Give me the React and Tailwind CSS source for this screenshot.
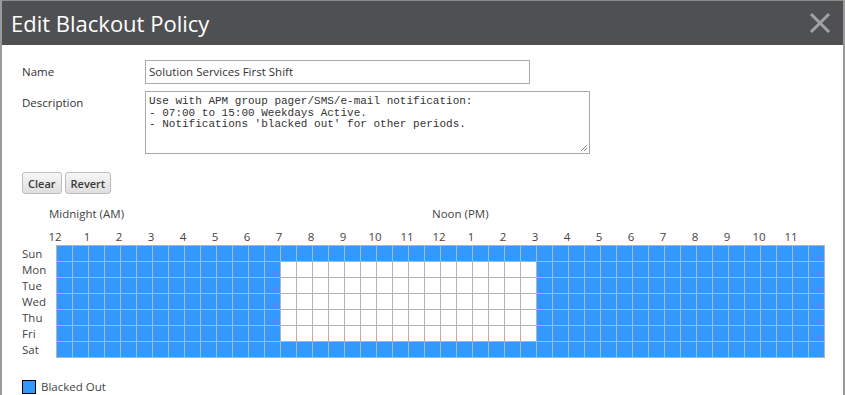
import React from "react";

const DAYS = ["Sun", "Mon", "Tue", "Wed", "Thu", "Fri", "Sat"];
const HOURS = ["12", "1", "2", "3", "4", "5", "6", "7", "8", "9", "10", "11", "12", "1", "2", "3", "4", "5", "6", "7", "8", "9", "10", "11"];

// weekdays 07:00 - 15:00 are active (not blacked out)
function isBlacked(day, slot) {
  if (day === 0 || day === 6) return true;
  return slot < 14 || slot >= 30;
}

function CloseIcon() {
  return (
    <svg width="22" height="22" viewBox="0 0 22 22">
      <path d="M3 3 L19 19 M19 3 L3 19" stroke="#9da2a4" strokeWidth="3" strokeLinecap="square" />
    </svg>
  );
}

function GridButton({ children }) {
  return (
    <button className="h-[22px] px-[5px] rounded-[3px] border border-[#bdbdbd] bg-gradient-to-b from-[#f7f7f7] to-[#dedede] text-[11px] font-semibold text-[#3a3a3a] leading-none">
      {children}
    </button>
  );
}

export default function App() {
  return (
    <div
      className="w-[845px] h-[395px] overflow-hidden bg-white border-l-2 border-r-2 border-[#9a9a9a] text-[#333]"
      style={{ fontFamily: '"Open Sans", "Noto Sans", sans-serif' }}
    >
      <div className="h-[45px] bg-[#4f5052] border-t border-[#8a8a8a] flex items-center justify-between pl-[9px] pr-[12px]">
        <div className="text-white text-[22px] leading-none">Edit Blackout Policy</div>
        <CloseIcon />
      </div>

      <div className="pl-[20px]">
        <div className="flex items-center mt-[15px]">
          <div className="w-[123px] text-[11.5px]">Name</div>
          <div className="w-[385px] h-[24px] border border-[#a9a9a9] px-[3px] flex items-center text-[11.5px]">
            Solution Services First Shift
          </div>
        </div>

        <div className="flex mt-[7px]">
          <div className="w-[123px] text-[11.5px] pt-[3px]">Description</div>
          <div className="relative w-[445px] h-[63px] border border-[#a9a9a9] px-[3px] pt-[4px]">
            <pre
              className="text-[11px] leading-[11.5px] text-[#333]"
              style={{ fontFamily: '"Liberation Mono", "DejaVu Sans Mono", monospace' }}
            >
{`Use with APM group pager/SMS/e-mail notification:
- 07:00 to 15:00 Weekdays Active.
- Notifications 'blacked out' for other periods.`}
            </pre>
            <svg className="absolute right-[1px] bottom-[1px]" width="8" height="8" viewBox="0 0 8 8">
              <path d="M7 1 L1 7 M7 4 L4 7" stroke="#888" strokeWidth="1" />
            </svg>
          </div>
        </div>

        <div className="flex gap-[3px] mt-[18px]">
          <GridButton>Clear</GridButton>
          <GridButton>Revert</GridButton>
        </div>

        <div className="flex mt-[12px] text-[11.5px] leading-[16px] text-[#444]">
          <div className="ml-[27px] w-[383px]">Midnight (AM)</div>
          <div>Noon (PM)</div>
        </div>

        <div className="flex mt-[7px] ml-[17px] text-[11.5px] leading-[16px] text-[#444]">
          {HOURS.map((h, i) => (
            <div key={i} className="w-[32px] text-center">
              {h}
            </div>
          ))}
        </div>

        <div className="flex">
          <div className="w-[34px] pt-px text-[11.5px] leading-[16px] text-[#444]">
            {DAYS.map((d) => (
              <div key={d} className="h-[16px]">
                {d}
              </div>
            ))}
          </div>
          <div className="grid grid-cols-[repeat(48,15px)] gap-px p-px bg-[#b4b4b4]">
            {DAYS.map((d, di) =>
              Array.from({ length: 48 }, (_, s) => (
                <div
                  key={d + s}
                  className={isBlacked(di, s) ? "h-[15px] bg-[#3399ff]" : "h-[15px] bg-white"}
                />
              ))
            )}
          </div>
        </div>

        <div className="flex items-center mt-[20px] gap-[5px]">
          <div className="w-[14px] h-[14px] bg-[#3399ff] border border-black" />
          <div className="text-[11.5px] text-[#444]">Blacked Out</div>
        </div>
      </div>
    </div>
  );
}
